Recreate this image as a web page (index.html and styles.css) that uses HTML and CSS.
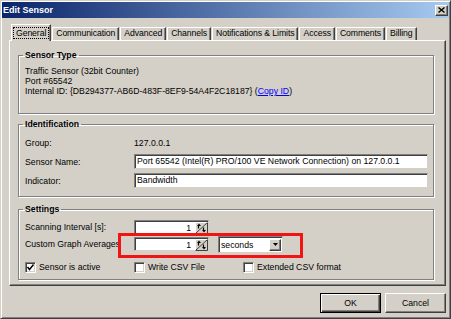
FILE: index.html
```html
<!DOCTYPE html>
<html>
<head>
<meta charset="utf-8">
<title>Edit Sensor</title>
<link rel="stylesheet" href="styles.css">
</head>
<body>
<div class="window">
  <div class="titlebar">
    <span class="title">Edit Sensor</span>
    <span class="close"><svg width="7" height="6" viewBox="0 0 7 6"><path d="M0.5 0.5 L6.5 5.5 M6.5 0.5 L0.5 5.5" stroke="#000" stroke-width="1.4"/></svg></span>
  </div>
  <div class="client">
    <div class="tabs">
      <div class="tab active"><span class="focus">General</span></div>
      <div class="tab">Communication</div>
      <div class="tab">Advanced</div>
      <div class="tab">Channels</div>
      <div class="tab">Notifications &amp; Limits</div>
      <div class="tab">Access</div>
      <div class="tab">Comments</div>
      <div class="tab">Billing</div>
    </div>
    <div class="panel">
      <fieldset class="group group-type">
        <legend>Sensor Type</legend>
        <div class="line">Traffic Sensor (32bit Counter)</div>
        <div class="line">Port #65542</div>
        <div class="line">Internal ID: {DB294377-AB6D-483F-8EF9-54A4F2C18187} (<a class="link">Copy ID</a>)</div>
      </fieldset>
      <fieldset class="group group-ident">
        <legend>Identification</legend>
        <div class="row"><span class="lbl">Group:</span><span class="val">127.0.0.1</span></div>
        <div class="row"><span class="lbl">Sensor Name:</span><div class="edit">Port 65542 (Intel(R) PRO/100 VE Network Connection) on 127.0.0.1</div></div>
        <div class="row"><span class="lbl">Indicator:</span><div class="edit">Bandwidth</div></div>
      </fieldset>
      <fieldset class="group group-settings">
        <legend>Settings</legend>
        <div class="row srow"><span class="lbl">Scanning Interval [s]:</span>
          <div class="spin"><span class="num">1</span><svg class="spinbtn" width="13" height="12" viewBox="0 0 13 12"><rect x="0" y="0" width="13" height="12" fill="#d4d0c8"/><path d="M0.5 11.5 V0.5 H12.5" stroke="#fff" fill="none"/><path d="M0.5 11.5 H12.5 V0.5" stroke="#404040" fill="none"/><path d="M1 11 L12 1" stroke="#404040"/><path d="M2 4 L4 1.5 L6 4 Z" fill="#000"/><path d="M3.5 4 V6.5" stroke="#000" stroke-width="1.2"/><path d="M7 8 L9 10.5 L11 8 Z" fill="#000"/><path d="M8.5 5.5 V8" stroke="#000" stroke-width="1.2"/></svg></div>
        </div>
        <div class="row srow"><span class="lbl">Custom Graph Averages</span>
          <div class="spin"><span class="num">1</span><svg class="spinbtn" width="13" height="12" viewBox="0 0 13 12"><rect x="0" y="0" width="13" height="12" fill="#d4d0c8"/><path d="M0.5 11.5 V0.5 H12.5" stroke="#fff" fill="none"/><path d="M0.5 11.5 H12.5 V0.5" stroke="#404040" fill="none"/><path d="M1 11 L12 1" stroke="#404040"/><path d="M2 4 L4 1.5 L6 4 Z" fill="#000"/><path d="M3.5 4 V6.5" stroke="#000" stroke-width="1.2"/><path d="M7 8 L9 10.5 L11 8 Z" fill="#000"/><path d="M8.5 5.5 V8" stroke="#000" stroke-width="1.2"/></svg></div>
          <div class="combo"><span class="ctext">seconds</span><span class="cbtn"><svg width="5" height="3" viewBox="0 0 5 3"><path d="M0 0 H5 L2.5 3 Z" fill="#000"/></svg></span></div>
        </div>
        <div class="checks">
          <label class="chk"><span class="box"><svg width="9" height="9" viewBox="0 0 9 9"><path d="M1.5 4 L3.5 6.5 L7.5 1.5" stroke="#000" stroke-width="1.5" fill="none"/></svg></span>Sensor is active</label>
          <label class="chk"><span class="box"></span>Write CSV File</label>
          <label class="chk"><span class="box"></span>Extended CSV format</label>
        </div>
      </fieldset>
      <div class="highlight"></div>
    </div>
    <div class="buttons">
      <div class="btn btn-default">OK</div>
      <div class="btn">Cancel</div>
    </div>
  </div>
</div>
</body>
</html>
```
FILE: styles.css
```css
* { box-sizing: border-box; }
html, body { margin: 0; padding: 0; }
body {
  width: 451px;
  height: 319px;
  overflow: hidden;
  background: #d4d0c8;
  font-family: "Liberation Sans", Arial, sans-serif;
  font-size: 8.7px;
  color: #000;
}
.window {
  width: 451px;
  height: 319px;
  border: 1px solid;
  border-color: #d4d0c8 #404040 #404040 #d4d0c8;
  box-shadow: inset 1px 1px #fff, inset -1px -1px #808080;
  padding: 1px;
  display: flex;
  flex-direction: column;
}
.titlebar {
  height: 16px;
  flex: none;
  background: linear-gradient(to right, #0a246a, #a6caf0);
  display: flex;
  align-items: center;
  justify-content: space-between;
  padding: 0 1px 0 1px;
}
.title {
  color: #fff;
  font-weight: bold;
  font-size: 9px;
}
.close {
  width: 13px;
  height: 11px;
  background: #d4d0c8;
  border: 1px solid;
  border-color: #fff #404040 #404040 #fff;
  box-shadow: inset -1px -1px #808080;
  display: flex;
  align-items: center;
  justify-content: center;
}
.client {
  flex: 1;
  padding: 6px 3px 0 7px;
  display: flex;
  flex-direction: column;
}
.tabs {
  height: 16px;
  flex: none;
  display: flex;
  align-items: flex-end;
  padding-left: 2px;
  position: relative;
  z-index: 1;
}
.tab {
  height: 13px;
  margin-right: 1px;
  padding: 0 3px;
  border: 1px solid;
  border-bottom: none;
  border-color: #fff #404040 transparent #fff;
  box-shadow: inset -1px 0 #808080;
  line-height: 11px;
  white-space: nowrap;
  letter-spacing: -0.1px;
}
.tab.active {
  height: 17px;
  margin-bottom: -1px;
  padding: 2px 1px 0 1px;
  background: #d4d0c8;
}
.focus {
  display: block;
  border: 1px dotted #000;
  padding: 0 2px;
  line-height: 10px;
}
.panel {
  flex: none;
  height: 246px;
  border: 1px solid;
  border-color: #fff #404040 #404040 #fff;
  box-shadow: inset -1px -1px #808080;
  padding: 9px 11px 0 8px;
  position: relative;
  display: flex;
  flex-direction: column;
}
.group {
  margin: 0;
  min-width: 0;
  border: 1px solid #808080;
  box-shadow: 1px 1px 0 #fff, inset 1px 1px 0 #fff;
  padding: 6px 4px 8px 6px;
}
.group legend {
  padding: 0 2px;
  margin-left: -2px;
  font-weight: bold;
  line-height: 10px;
}
.group-type { padding-bottom: 17px; }
.group-ident { margin-top: 5px; }
.group-settings { margin-top: 7px; padding-bottom: 6px; }
.line { line-height: 10px; height: 10px; white-space: nowrap; }
.link { color: #0000ff; text-decoration: underline; }
.row {
  display: flex;
  align-items: center;
  height: 15px;
  margin-bottom: 4px;
}
.row:last-child { margin-bottom: 0; }
.lbl { width: 109px; flex: none; white-space: nowrap; }
.edit {
  width: 294px;
  height: 15px;
  background: #fff;
  border: 1px solid;
  border-color: #808080 #d4d0c8 #d4d0c8 #808080;
  box-shadow: inset 1px 1px #404040, inset -1px -1px #fff;
  padding: 0 2px;
  line-height: 13px;
  white-space: nowrap;
  overflow: hidden;
}
.srow { height: 14px; margin-bottom: 3px; }
.spin {
  width: 75px;
  height: 14px;
  background: #fff;
  border: 1px solid;
  border-color: #808080 #d4d0c8 #d4d0c8 #808080;
  box-shadow: inset 1px 1px #404040;
  display: flex;
  align-items: stretch;
  padding: 1px 0 0 1px;
}
.num {
  flex: 1;
  text-align: right;
  padding-right: 4px;
  line-height: 12px;
}
.spinbtn { display: block; flex: none; }
.combo {
  width: 65px;
  height: 17px;
  margin-left: 9px;
  background: #fff;
  border: 1px solid;
  border-color: #808080 #d4d0c8 #d4d0c8 #808080;
  box-shadow: inset 1px 1px #404040;
  display: flex;
  align-items: stretch;
  padding: 2px 1px 1px 2px;
}
.ctext { flex: 1; line-height: 12px; }
.cbtn {
  width: 12px;
  flex: none;
  background: #d4d0c8;
  border: 1px solid;
  border-color: #fff #404040 #404040 #fff;
  box-shadow: inset -1px -1px #808080;
  display: flex;
  align-items: center;
  justify-content: center;
}
.checks {
  display: grid;
  grid-template-columns: 109px 109px 1fr;
  height: 12px;
  margin-top: 10px;
  align-items: center;
}
.chk {
  display: flex;
  align-items: center;
  white-space: nowrap;
}
.box {
  width: 11px;
  height: 11px;
  margin-right: 3px;
  background: #fff;
  border: 1px solid;
  border-color: #808080 #fff #fff #808080;
  box-shadow: inset 1px 1px #404040, inset -1px -1px #d4d0c8;
  display: flex;
  align-items: center;
  justify-content: center;
}
.highlight {
  position: absolute;
  left: 108px;
  top: 192px;
  width: 185px;
  height: 25px;
  border: 3px solid #f01414;
}
.buttons {
  display: flex;
  justify-content: flex-end;
  gap: 4px;
  margin-top: 7px;
}
.btn {
  width: 61px;
  height: 20px;
  border: 1px solid;
  border-color: #fff #404040 #404040 #fff;
  box-shadow: inset -1px -1px #808080;
  display: flex;
  align-items: center;
  justify-content: center;
}
.btn-default {
  border-color: #000;
  box-shadow: inset 1px 1px #fff, inset -1px -1px #404040, inset -2px -2px #808080;
}
```
